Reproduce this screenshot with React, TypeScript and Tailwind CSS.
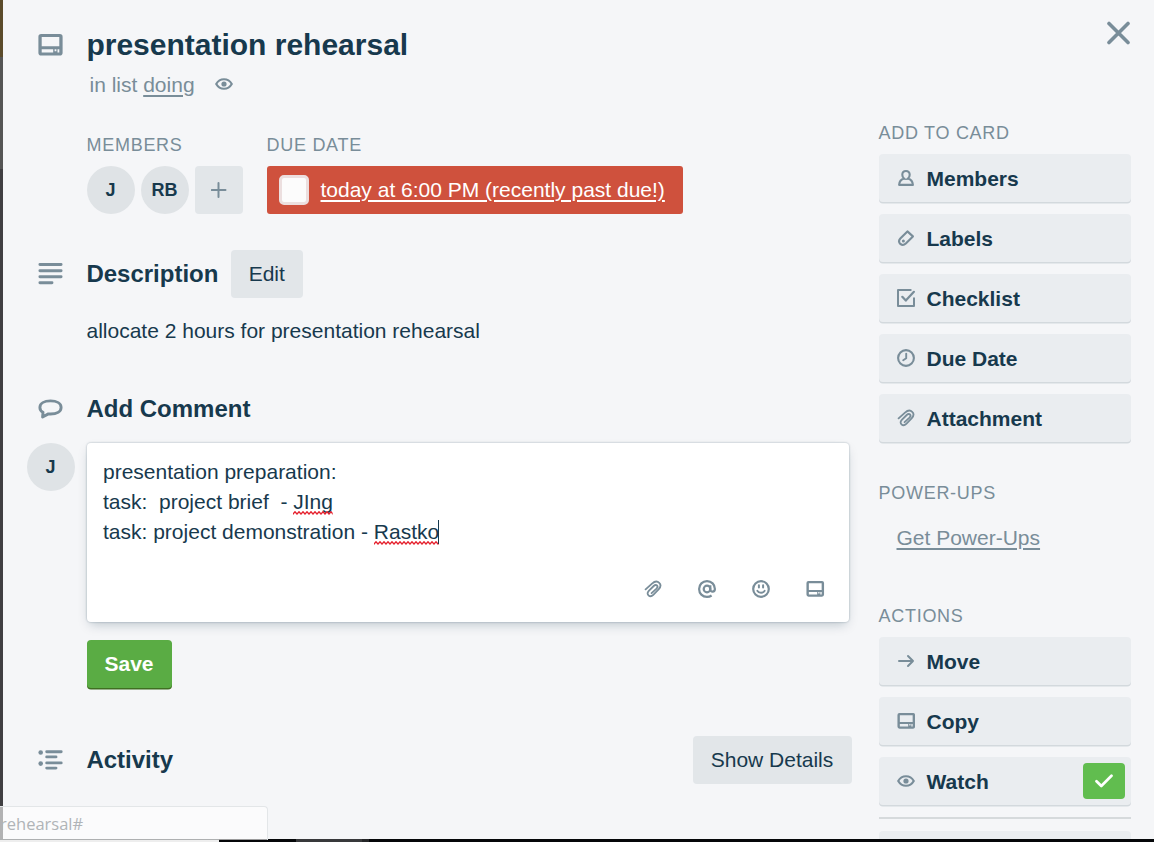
import type { ReactNode } from "react";

function CardIcon({ className }: { className: string }) {
  return (
    <svg viewBox="0 0 25 22" className={className} fill="currentColor" fillRule="evenodd">
      <path d="M3.2 0H21.8A2.8 2.8 0 0 1 24.6 2.8V18.7A2.8 2.8 0 0 1 21.8 21.5H3.2A2.8 2.8 0 0 1 .4 18.7V2.8A2.8 2.8 0 0 1 3.2 0ZM3.7 3V12.3H21.3V3ZM3.7 15.2V18.4H15.2V15.2ZM16.6 15.2V17.2H18.4V15.2ZM19.5 15.2V18.4H21.3V15.2Z" />
    </svg>
  );
}

function EyeIcon({ className }: { className: string }) {
  return (
    <svg viewBox="0 0 18 12" className={className} fill="none" stroke="currentColor" strokeWidth="2.1">
      <path d="M1.2 6C3 2.9 5.8 1.3 9 1.3S15 2.9 16.8 6C15 9.1 12.2 10.7 9 10.7S3 9.1 1.2 6Z" strokeLinejoin="round" />
      <circle cx="9" cy="6" r="2.6" fill="currentColor" stroke="none" />
    </svg>
  );
}

function ClipIcon({ className }: { className: string }) {
  return (
    <svg viewBox="0 0 18 18" className={className} fill="none" stroke="currentColor" strokeWidth="1.8" strokeLinecap="round" strokeLinejoin="round">
      <path d="M1.6 9.4L8 3.6C10.4 1.5 13.4 1.1 15.2 2.8C17.1 4.6 16.6 7.2 14.6 9.4L9.3 14.8C7.8 16.3 5.8 16.6 4.5 15.3C3.2 14.1 3.3 12.3 4.8 10.8L9.7 6C10.9 4.8 12.2 4.7 13 5.5C13.9 6.4 13.6 7.5 12.5 8.6L7.6 13.2" />
    </svg>
  );
}

function MemberIcon() {
  return (
    <svg viewBox="0 0 18 18" className="size-[18px]" fill="none" stroke="currentColor" strokeWidth="2.1" strokeLinejoin="round">
      <path d="M9 2C6.8 2 5.3 3.6 5.3 5.7C5.3 7.4 6.1 8.8 7.1 9.5C4.1 10.3 2.3 12.4 2.1 15.9H15.9C15.7 12.4 13.9 10.3 10.9 9.5C11.9 8.8 12.7 7.4 12.7 5.7C12.7 3.6 11.2 2 9 2Z" />
      <path d="M7.2 10.2H10.8" strokeWidth="1.4" />
    </svg>
  );
}

function LabelIcon() {
  return (
    <svg viewBox="0 0 18 18" className="size-[18px]" fill="none" stroke="currentColor" strokeWidth="2.1" strokeLinejoin="round">
      <path d="M10.4 2.4L15.9 7.4L8.8 14.6C7.1 16.2 4.8 16.2 3.3 14.9C1.8 13.4 1.8 11.2 3.3 9.5Z" />
      <circle cx="6.4" cy="11.9" r="1.5" fill="currentColor" stroke="none" />
    </svg>
  );
}

function ChecklistIcon() {
  return (
    <svg viewBox="0 0 18 18" className="size-[18px]" fill="none" stroke="currentColor" strokeWidth="2" strokeLinecap="round" strokeLinejoin="round">
      <path d="M13.7 1H1V17H17V9.2" />
      <path d="M5.3 7.8L8.8 11.6L16.9 2.8" strokeWidth="2.2" />
    </svg>
  );
}

function ClockIcon() {
  return (
    <svg viewBox="0 0 18 18" className="size-[18px]" fill="none" stroke="currentColor" strokeWidth="2.1" strokeLinecap="round">
      <circle cx="9" cy="9" r="7.9" />
      <path d="M9.2 4.6V9.3L6.2 11.2" strokeLinejoin="round" strokeWidth="1.9" />
    </svg>
  );
}

function ArrowIcon() {
  return (
    <svg viewBox="0 0 18 18" className="size-[18px]" fill="none" stroke="currentColor" strokeWidth="2" strokeLinecap="round" strokeLinejoin="round">
      <path d="M2 9H16M11 4L16 9L11 14" />
    </svg>
  );
}

function SideHeading({ children }: { children: ReactNode }) {
  return <h3 className="-ml-[0.5px] h-[42px] shrink-0 pt-[11px] text-[18px] leading-5 tracking-[0.72px] text-[#798d99]">{children}</h3>;
}

function SideButton({ icon, label, children }: { icon: ReactNode; label: string; children?: ReactNode }) {
  return (
    <button className="flex h-12 w-full shrink-0 items-center rounded-[4px] bg-[#eaedf0] pr-1.5 pl-[17.5px] text-left shadow-[0_1.5px_0_#d3d9dd]">
      <span className="flex w-[30px] items-center text-[#798d99]">{icon}</span>
      <span className="grow pt-px text-[21px] leading-6 font-bold">{label}</span>
      {children}
    </button>
  );
}

function Avatar({ initials }: { initials: string }) {
  return (
    <div className="flex size-12 shrink-0 items-center justify-center rounded-full bg-[#dfe3e6] text-[18px] leading-6 font-bold">
      <span className="-translate-x-[0.5px]">{initials}</span>
    </div>
  );
}

function RowIcon({ children }: { children: ReactNode }) {
  return <div className="flex w-[83.4px] shrink-0 justify-center pr-[10.4px] pl-[22px] text-[#798d99]">{children}</div>;
}

function Misspelled({ children, id, caret = false }: { children: ReactNode; id: string; caret?: boolean }) {
  return (
    <span className="relative inline-block">
      {children}
      <svg className="absolute bottom-[2px] left-0 h-[4px] w-full">
        <defs>
          <pattern id={id} width="4" height="4" patternUnits="userSpaceOnUse">
            <path d="M-2 .8L0 3L2 .8L4 3L6 .8" fill="none" stroke="#e5202d" strokeWidth="1.4" />
          </pattern>
        </defs>
        <rect width="100%" height="4" fill={`url(#${id})`} />
      </svg>
      {caret && <span className="absolute top-[3px] right-0 h-6 w-px bg-[#17394d]" />}
    </span>
  );
}

function MainColumn() {
  return (
    <main className="flex w-[849px] shrink-0 flex-col">
      <div className="mt-[27px] flex h-9 items-center">
        <RowIcon><CardIcon className="h-[22px] w-[25px]" /></RowIcon>
        <h1 className="text-[30px] leading-9 font-bold">presentation rehearsal</h1>
      </div>
      <div className="mt-[7px] ml-[86.5px] flex h-[30px] items-center text-[21px] leading-[30px] text-[#798d99]">
        <p>in list <a className="underline decoration-2 underline-offset-[3px]">doing</a></p>
        <EyeIcon className="mb-[2px] ml-[20.5px] h-3 w-[18px]" />
      </div>

      <div className="mt-[35px] ml-[84px] flex gap-6">
        <section className="w-[156px]">
          <h3 className="-ml-[0.5px] h-[31px] text-[18px] leading-5 tracking-[0.72px] text-[#798d99]">MEMBERS</h3>
          <div className="flex gap-1.5">
            <Avatar initials="J" />
            <Avatar initials="RB" />
            <button className="flex size-12 items-center justify-center rounded-[4px] bg-[#e2e6e9] text-[#798d99]">
              <svg viewBox="0 0 16 16" className="size-4" stroke="currentColor" strokeWidth="2" strokeLinecap="round">
                <path d="M7.5 1V15M.8 8H14.5" />
              </svg>
            </button>
          </div>
        </section>
        <section>
          <h3 className="-ml-[0.5px] h-[31px] text-[18px] leading-5 tracking-[0.72px] text-[#798d99]">DUE DATE</h3>
          <div className="flex h-12 w-[416px] items-center rounded-[3px] bg-[#cf513d] pl-3 text-[21px] leading-6 text-white">
            <span className="mr-[11.5px] size-[30px] rounded-[5px] border-[3px] border-[#ecdfdf] bg-[#fcfcfc]" />
            <a className="underline decoration-2 underline-offset-[3px]">today at 6:00 PM (recently past due!)</a>
          </div>
        </section>
      </div>

      <div className="mt-9 flex h-12 items-center">
        <RowIcon>
          <svg viewBox="0 0 25 22" className="h-[22px] w-[25px]" stroke="currentColor" strokeWidth="2.9" strokeLinecap="round">
            <path d="M1.9 1.5H23.1M1.9 7.7H23.1M1.9 13.7H23.1M1.9 19.7H14" />
          </svg>
        </RowIcon>
        <h2 className="text-2xl leading-7 font-bold">Description</h2>
        <button className="ml-[12.8px] h-12 w-[72px] rounded-[4px] bg-[#e2e6e9] pr-px text-[21px] leading-6">Edit</button>
      </div>
      <p className="mt-[18px] ml-[83.5px] text-[21px] leading-[30px]">allocate 2 hours for presentation rehearsal</p>

      <div className="mt-[39px] flex h-12 items-center">
        <RowIcon>
          <svg viewBox="0 0 25 20" className="h-5 w-[25px]" fill="none" stroke="currentColor" strokeWidth="2.9" strokeLinejoin="round">
            <path d="M12.5 1.9C6.2 1.9 1.9 4.4 1.9 8.4C1.9 10.6 3 12.2 5 13.2L4.6 18L10.4 14.9C11.1 15 11.8 15 12.5 15C18.8 15 23.1 12.4 23.1 8.4C23.1 4.4 18.8 1.9 12.5 1.9Z" />
          </svg>
        </RowIcon>
        <h2 className="text-2xl leading-7 font-bold">Add Comment</h2>
      </div>

      <div className="mt-[10px] flex pl-6">
        <Avatar initials="J" />
        <div className="ml-3 flex h-[179px] w-[762px] flex-col rounded-[4px] bg-white pt-[14px] pl-4 shadow-[0_5px_12px_-3px_rgba(9,45,66,.25),0_0_1.5px_1px_rgba(9,45,66,.13)]">
          <div className="h-[108px] text-[21px] leading-[30px] whitespace-pre">
            <p>presentation preparation:</p>
            <p>{"task:  project brief  - "}<Misspelled id="wave-first">JIng</Misspelled></p>
            <p>task: project demonstration - <Misspelled id="wave-second" caret>Rastko</Misspelled></p>
          </div>
          <div className="mr-[24.5px] flex h-12 items-center justify-end gap-9 text-[#798d99]">
            <ClipIcon className="size-[18px]" />
            <svg viewBox="0 0 18 18" className="size-[18px]" fill="none" stroke="currentColor" strokeWidth="2.2">
              <circle cx="9" cy="9" r="3.3" />
              <path d="M12.3 5.2V9.8C12.3 12.3 16.9 12.4 16.9 9C16.9 4.5 13.5 1.1 9 1.1S1.1 4.5 1.1 9S4.5 16.9 9 16.9C10.8 16.9 12.3 16.4 13.6 15.5" />
            </svg>
            <svg viewBox="0 0 18 18" className="size-[18px]" fill="none" stroke="currentColor" strokeWidth="2.2">
              <circle cx="9" cy="9" r="7.8" />
              <path d="M6.9 5.3V7.4M11.1 5.3V7.4" strokeWidth="2" strokeLinecap="round" />
              <path d="M5.4 10.9C6.6 13.3 11.4 13.3 12.6 10.9" strokeWidth="2" strokeLinecap="round" />
            </svg>
            <CardIcon className="h-4 w-[18.5px]" />
          </div>
        </div>
      </div>
      <button className="mt-[18px] ml-[84px] h-12 w-[85px] shrink-0 rounded-[4px] bg-[#5aac44] pr-px text-[21px] leading-6 font-bold text-white shadow-[0_1.5px_0_#3f6f21]">Save</button>

      <div className="mt-12 flex h-12 items-center">
        <RowIcon>
          <svg viewBox="0 0 25 20" className="h-5 w-[25px]" fill="currentColor" stroke="currentColor" strokeWidth="2.9" strokeLinecap="round">
            <path d="M8.7 1.7H23.2M8.7 6.9H18M8.7 12.9H23.2M8.7 18.1H18" />
            <circle cx="2.7" cy="2.5" r="2.3" stroke="none" />
            <circle cx="2.7" cy="13.6" r="2.3" stroke="none" />
          </svg>
        </RowIcon>
        <h2 className="grow text-2xl leading-7 font-bold">Activity</h2>
        <button className="h-12 w-[159px] rounded-[4px] bg-[#e2e6e9] pr-px text-[21px] leading-6">Show Details</button>
      </div>
    </main>
  );
}

function Sidebar() {
  return (
    <aside className="ml-[27px] flex w-[252px] shrink-0 flex-col pt-28">
      <SideHeading>ADD TO CARD</SideHeading>
      <div className="flex flex-col gap-3">
        <SideButton icon={<MemberIcon />} label="Members" />
        <SideButton icon={<LabelIcon />} label="Labels" />
        <SideButton icon={<ChecklistIcon />} label="Checklist" />
        <SideButton icon={<ClockIcon />} label="Due Date" />
        <SideButton icon={<ClipIcon className="size-[18px]" />} label="Attachment" />
      </div>
      <div className="mt-[30px]"><SideHeading>POWER-UPS</SideHeading></div>
      <a className="mt-[9px] ml-[17.5px] text-[21px] leading-[30px] text-[#798d99] underline decoration-2 underline-offset-[3px]">Get Power-Ups</a>
      <div className="mt-[42px]"><SideHeading>ACTIONS</SideHeading></div>
      <div className="flex flex-col gap-3">
        <SideButton icon={<ArrowIcon />} label="Move" />
        <SideButton icon={<CardIcon className="h-4 w-[18.5px]" />} label="Copy" />
        <SideButton icon={<EyeIcon className="h-3 w-[18px]" />} label="Watch">
          <span className="flex h-9 w-[42px] items-center justify-center rounded-[4px] bg-[#61bd4f]">
            <svg viewBox="0 0 18 14" className="h-[14px] w-[18px]" fill="none" stroke="white" strokeWidth="2.7" strokeLinecap="round" strokeLinejoin="round">
              <path d="M1.5 7.2L6.3 12L16.5 1.8" />
            </svg>
          </span>
        </SideButton>
      </div>
      <hr className="mt-3 h-[2px] shrink-0 border-0 bg-[#d6dadc]" />
      <div className="mt-3 h-12 shrink-0 rounded-[4px] bg-[#eaedf0]" />
    </aside>
  );
}

export default function App() {
  return (
    <div className="relative flex h-[842px] w-[1154px] flex-col overflow-hidden bg-[#f5f6f8] font-['Liberation_Sans',Arial,sans-serif] text-[#17394d]">
      <div className="flex h-[839px] shrink-0 overflow-hidden">
        <div className="flex w-[3px] shrink-0 flex-col">
          <div className="h-[57px] bg-[#5b4b2b]" />
          <div className="h-[112px] bg-[#555555]" />
          <div className="grow bg-[#403f42]" />
        </div>
        <MainColumn />
        <Sidebar />
      </div>
      <div className="flex h-[3px] shrink-0 bg-[#050709]">
        <div className="w-[219px] bg-[#eeeeee]" />
        <div className="ml-[77px] w-[66px] bg-[#38393b]" />
        <div className="w-[7px] bg-[#252628]" />
      </div>
      <button aria-label="Close" className="absolute top-[21px] right-6 text-[#798d99]">
        <svg viewBox="0 0 24 24" className="size-6" stroke="currentColor" strokeWidth="3.6" strokeLinecap="round">
          <path d="M3 2.5L22 21.5M22 2.5L3 21.5" />
        </svg>
      </button>
      <div className="absolute top-[806px] left-0 h-[34px] w-[268px] rounded-tr-[4px] border-t border-r border-[#e3e6e8] bg-white/60 font-['Open_Sans','Noto_Sans',sans-serif] text-[16.5px] leading-[34px] text-[#b0b4b7]">rehearsal#
        <div className="absolute bottom-0 left-0 h-px w-[219px] bg-[#aeb0b1]" />
      </div>
    </div>
  );
}
